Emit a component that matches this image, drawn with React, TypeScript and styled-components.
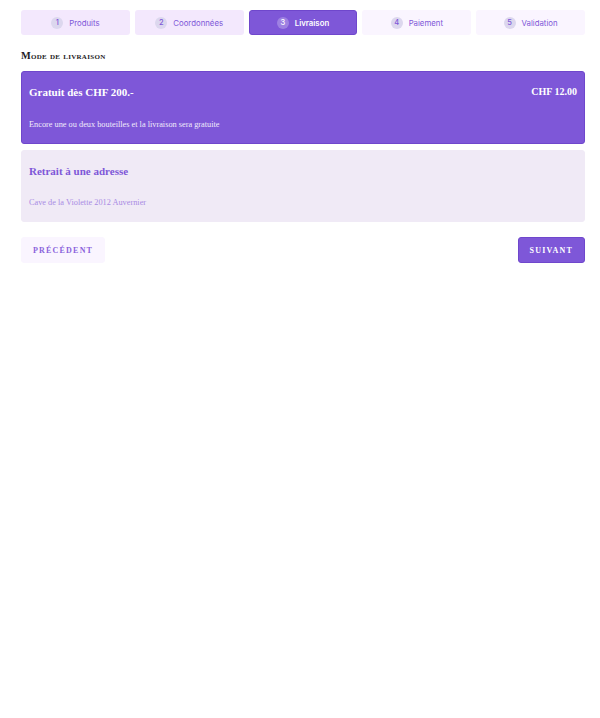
import styled, { createGlobalStyle } from 'styled-components';

const GlobalStyle = createGlobalStyle`
  body {
    margin: 0;
    background: #ffffff;
    font-family: "Liberation Serif", serif;
  }
`;

const Page = styled.div`
  width: 564px;
  padding: 10px 0 0 21px;
`;

const Steps = styled.div`
  display: grid;
  grid-template-columns: repeat(5, 1fr);
  gap: 5px;
`;

const Step = styled.div<{ $state: 'done' | 'active' | 'todo' }>`
  height: 25px;
  box-sizing: border-box;
  display: flex;
  align-items: center;
  justify-content: center;
  gap: 6px;
  border-radius: 3px;
  font-family: Inter, "Noto Sans", sans-serif;
  font-size: 7.8px;
  font-weight: ${(p) => (p.$state === 'active' ? 600 : 400)};
  color: ${(p) => (p.$state === 'active' ? '#ffffff' : '#7e57d8')};
  background: ${(p) =>
    p.$state === 'active' ? '#7e57d8' : p.$state === 'done' ? '#f3e8fd' : '#faf5ff'};
  border: 1px solid ${(p) => (p.$state === 'active' ? '#6f47cc' : 'transparent')};
`;

const StepNumber = styled.span<{ $active: boolean }>`
  width: 12px;
  height: 12px;
  border-radius: 50%;
  display: flex;
  align-items: center;
  justify-content: center;
  font-size: 7.5px;
  font-weight: 500;
  background: ${(p) => (p.$active ? 'rgba(255,255,255,0.25)' : '#dcd7ee')};
  color: ${(p) => (p.$active ? '#ffffff' : '#7e57d8')};
`;

const Heading = styled.h2`
  margin: 14px 0 8px;
  font-family: "Liberation Serif", serif;
  font-size: 10.3px;
  font-weight: 700;
  font-variant: small-caps;
  letter-spacing: 0.3px;
  color: #1e1b24;
  line-height: 14px;
`;

const Options = styled.div`
  display: flex;
  flex-direction: column;
  gap: 6px;
`;

const Option = styled.div<{ $selected: boolean }>`
  box-sizing: border-box;
  height: ${(p) => (p.$selected ? '73px' : '72px')};
  padding: 11px 7px;
  border-radius: 3px;
  display: flex;
  flex-direction: column;
  justify-content: space-between;
  background: ${(p) => (p.$selected ? '#7e57d8' : '#f0eaf6')};
  border: 1px solid ${(p) => (p.$selected ? '#6f47cc' : '#f0eaf6')};
  color: ${(p) => (p.$selected ? '#ffffff' : '#7e57d8')};
`;

const OptionHeader = styled.div`
  display: flex;
  justify-content: space-between;
  align-items: center;
  line-height: 18px;
`;

const OptionTitle = styled.span`
  font-size: 11px;
  font-weight: 700;
`;

const OptionPrice = styled.span`
  font-size: 10px;
  font-weight: 700;
`;

const OptionText = styled.div<{ $selected: boolean }>`
  font-size: 8.3px;
  line-height: 14px;
  color: ${(p) => (p.$selected ? '#f1ecfb' : '#a98ae4')};
`;

const Actions = styled.div`
  display: flex;
  justify-content: space-between;
  margin-top: 15px;
`;

const NavButton = styled.button<{ $primary?: boolean }>`
  height: 26px;
  box-sizing: border-box;
  padding: 0 ${(p) => (p.$primary ? '11px' : '11px')};
  border-radius: 3px;
  font-family: "Liberation Serif", serif;
  font-size: 8px;
  font-weight: ${(p) => (p.$primary ? 700 : 600)};
  letter-spacing: 1.2px;
  text-transform: uppercase;
  cursor: pointer;
  background: ${(p) => (p.$primary ? '#7e57d8' : '#faf5ff')};
  color: ${(p) => (p.$primary ? '#ffffff' : '#8a63dc')};
  border: 1px solid ${(p) => (p.$primary ? '#6f47cc' : '#faf5ff')};
`;

const steps = ['Produits', 'Coordonnées', 'Livraison', 'Paiement', 'Validation'];
const current = 2;

export default function App() {
  return (
    <>
      <GlobalStyle />
      <Page>
        <Steps>
          {steps.map((label, i) => {
            const state = i < current ? 'done' : i === current ? 'active' : 'todo';
            return (
              <Step key={label} $state={state}>
                <StepNumber $active={i === current}>{i + 1}</StepNumber>
                {label}
              </Step>
            );
          })}
        </Steps>
        <Heading>Mode de livraison</Heading>
        <Options>
          <Option $selected>
            <OptionHeader>
              <OptionTitle>Gratuit dès CHF 200.-</OptionTitle>
              <OptionPrice>CHF 12.00</OptionPrice>
            </OptionHeader>
            <OptionText $selected>Encore une ou deux bouteilles et la livraison sera gratuite</OptionText>
          </Option>
          <Option $selected={false}>
            <OptionHeader>
              <OptionTitle>Retrait à une adresse</OptionTitle>
            </OptionHeader>
            <OptionText $selected={false}>Cave de la Violette 2012 Auvernier</OptionText>
          </Option>
        </Options>
        <Actions>
          <NavButton>Précédent</NavButton>
          <NavButton $primary>Suivant</NavButton>
        </Actions>
      </Page>
    </>
  );
}
